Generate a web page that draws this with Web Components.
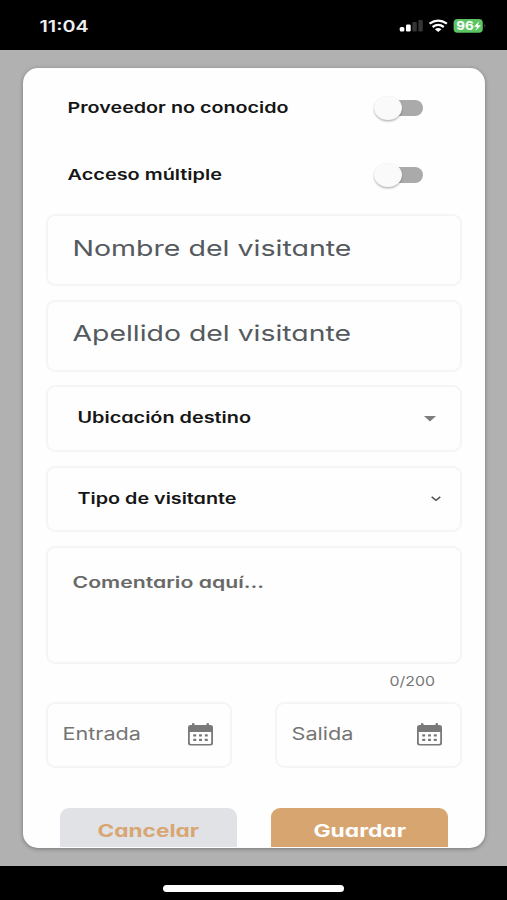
<!DOCTYPE html>
<html lang="es">
<head>
<meta charset="utf-8">
<title>Registro de visitante</title>
<style>
html,body{margin:0;padding:0;background:#b1b1b1}
body{font-family:Inter,"Open Sans","Liberation Sans",sans-serif;overflow:hidden}
</style>
</head>
<body>
<visitor-screen></visitor-screen>
<script>
const define = (name, html, setup) => customElements.define(name, class extends HTMLElement {
  connectedCallback() {
    if (this.shadowRoot) return;
    const root = this.attachShadow({mode: 'open'});
    root.innerHTML = typeof html === 'function' ? html(this) : html;
    if (setup) setup(this, root);
  }
});

// A single line of wide lettering; its box ends at the baseline.
define('wide-text', el => {
  const w = +el.getAttribute('w');
  const feat = el.hasAttribute('plain') ? 'normal' : '"cv11"';
  return `<style>:host{display:block;flex:none;height:20px;width:${w}px}
  svg{display:block;overflow:visible}
  text{font-size:${el.getAttribute('size')}px;font-weight:${el.getAttribute('weight') || 400};fill:currentColor;font-feature-settings:${feat}}</style>
  <svg width="${w}" height="20"><text x="-0.5" y="20" textLength="${w + 1}" lengthAdjust="spacingAndGlyphs">${el.getAttribute('text')}</text></svg>`;
});

define('status-bar', `<style>
:host{display:flex;height:49.5px;background:#000;color:#f0f0f0;box-sizing:border-box;padding:11.6px 20px 0 40px;justify-content:space-between}
svg{display:block;margin-top:5.4px}
text{font-size:12px;font-weight:700;fill:#fff}
</style>
<wide-text plain text="11:04" w="48" size="15.6" weight="600"></wide-text>
<svg width="88" height="18" viewBox="399 17 88 18">
  <rect x="399.7" y="27" width="4.7" height="4.5" rx="1.5" fill="#fff"/>
  <rect x="406" y="24.5" width="4.7" height="7" rx="1.3" fill="#fff"/>
  <rect x="412.3" y="22" width="4.5" height="9.5" rx="1.2" fill="#343434"/>
  <rect x="418.3" y="20" width="4.5" height="11.5" rx="1.2" fill="#343434"/>
  <g fill="none" stroke="#fff" stroke-width="2.2">
    <path d="M429.5 23.7Q438.2 17.4 446.9 23.7"/><path d="M432.6 27Q438.2 22.8 443.8 27"/>
  </g>
  <path d="M434.9 29.2Q438.2 26.8 441.5 29.2L438.2 31.9Z" fill="#fff"/>
  <rect x="453.6" y="19" width="29.2" height="13.8" rx="4" fill="#5cc463"/>
  <path d="M484.4 23.7q2.1 2 0 4.2z" fill="#444"/>
  <text x="456.3" y="30.3" textLength="17.5" lengthAdjust="spacingAndGlyphs">96</text>
  <path d="M479.2 21.3L473.9 26.7H477.1L475.4 30.8L481 25.2H477.7Z" fill="#fff"/>
</svg>`);

define('toggle-row', `<style>
:host{display:flex;justify-content:space-between;align-items:flex-start;height:26px;padding:0 62px 0 45px;color:#161616}
.track{width:45px;height:16px;border-radius:8px;background:linear-gradient(90deg,transparent 14px,#aaa 14px);margin-top:8px;position:relative}
.knob{position:absolute;left:-4px;top:-4px;width:28px;height:24px;border-radius:50%;background:#fafafa;box-shadow:0 1.5px 2px #0004,0 0 1px #0001}
::slotted(*){margin-top:1px}
</style><slot></slot><div class="track"><div class="knob"></div></div>`);

define('field-box', `<style>
:host{display:flex;box-sizing:border-box;border:2px solid #f3f5f6;border-radius:9px;background:#fefefe;justify-content:space-between;align-items:flex-start}
</style><slot></slot>`);

define('calendar-icon', `<style>:host{display:block}svg{display:block}</style>
<svg width="25" height="23" viewBox="0 0 25 23">
<path fill="#797979" fill-rule="evenodd" d="M4 .4Q5.2-.3 6.5.4V2H18.5V.4Q19.8-.3 21 .4V2H22.5Q25 2 25 4.3V20Q25 22.5 22.5 22.5H2.5Q0 22.5 0 20V4.3Q0 2 2.5 2H4ZM1.8 9V19.8Q1.8 20.9 2.9 20.9H22.1Q23.2 20.9 23.2 19.8V9Z"/>
<g fill="#797979"><rect x="5.2" y="11.2" width="3" height="2.4" rx=".6"/><rect x="11" y="11.2" width="3" height="2.4" rx=".6"/><rect x="16.8" y="11.2" width="3" height="2.4" rx=".6"/><rect x="5.2" y="15.7" width="3" height="2.4" rx=".6"/><rect x="11" y="15.7" width="3" height="2.4" rx=".6"/><rect x="16.8" y="15.7" width="3" height="2.4" rx=".6"/></g>
</svg>`);

define('action-button', `<style>
:host{display:flex;justify-content:center;box-sizing:border-box;width:177px;height:38.5px;border-radius:9px 9px 0 0;padding-top:9px;background:var(--fill)}
</style><slot></slot>`);

define('visitor-card', `<style>
:host{display:block;box-sizing:border-box;margin:18px 22px 0 22.5px;height:780.5px;background:#fefefe;border-radius:15px;box-shadow:0 1px 4px #0005;overflow:hidden;padding-top:24.8px}
.fields{display:flex;flex-direction:column;margin:29.4px 23.2px 0 23.3px;color:#555a5e}
toggle-row+toggle-row{margin-top:40.7px}
.in{height:72px;padding:19.5px 25px 0;margin-bottom:13.5px}
.sel{padding:15.5px 24px 0 30px;color:#161616}
.count{align-self:flex-end;margin:2.6px 27.5px 0 0;color:#777}
.dates{display:flex;justify-content:space-between;margin-top:16px;color:#757575}
.dates field-box{width:186.5px;height:65.5px;padding:15.7px 17.5px 0 14.8px}
calendar-icon{margin-top:3.2px}
.actions{display:flex;justify-content:space-between;margin:40.5px 37.2px 0 37px}
svg{display:block}
</style>
<toggle-row><wide-text text="Proveedor no conocido" w="220" size="15.2" weight="600"></wide-text></toggle-row>
<toggle-row><wide-text text="Acceso múltiple" w="153.5" size="15.2" weight="600"></wide-text></toggle-row>
<div class="fields">
<field-box class="in"><wide-text text="Nombre del visitante" w="278" size="21.8"></wide-text></field-box>
<field-box class="in"><wide-text text="Apellido del visitante" w="277.5" size="21.8"></wide-text></field-box>
<field-box class="sel" style="height:66.5px"><wide-text text="Ubicación destino" w="172.5" size="15.3" weight="600"></wide-text><svg style="margin-top:13px" width="12" height="6"><path d="M0 0H12L6 5.6Z" fill="#7d7d7d"/></svg></field-box>
<field-box class="sel" style="height:66px;margin-top:14.4px;padding-right:19px"><wide-text text="Tipo de visitante" w="158" size="15.3" weight="600"></wide-text><svg style="margin-top:12.6px" width="10" height="6"><path d="M.7.9L5 4.3L9.3.9" fill="none" stroke="#555" stroke-width="1.6"/></svg></field-box>
<field-box style="height:117.5px;margin-top:14px;padding:20px 25px 0;color:#696969"><wide-text text="Comentario aquí..." w="190.5" size="15.6" weight="600"></wide-text></field-box>
<wide-text class="count" plain text="0/200" w="44.5" size="13.5"></wide-text>
<div class="dates">
<field-box><wide-text plain text="Entrada" w="77.5" size="17.5"></wide-text><calendar-icon></calendar-icon></field-box>
<field-box><wide-text plain text="Salida" w="61" size="17.5"></wide-text><calendar-icon></calendar-icon></field-box>
</div></div>
<div class="actions">
<action-button style="--fill:#e0e2e6;color:#d8a672"><wide-text text="Cancelar" w="100.5" size="17.8" weight="650"></wide-text></action-button>
<action-button style="--fill:#d7a570;color:#fff"><wide-text text="Guardar" w="91.5" size="17.8" weight="700"></wide-text></action-button>
</div>`);

define('home-bar', `<style>
:host{display:flex;height:34px;background:#000;justify-content:center;box-sizing:border-box;padding-top:19px}
i{width:181px;height:6.5px;border-radius:4px;background:#fff}
</style><i></i>`);

define('visitor-screen', `<style>
:host{display:flex;flex-direction:column;height:900px;width:507px;background:#b1b1b1}
home-bar{margin-top:auto}
</style><status-bar></status-bar><visitor-card></visitor-card><home-bar></home-bar>`);
</script>
</body>
</html>
